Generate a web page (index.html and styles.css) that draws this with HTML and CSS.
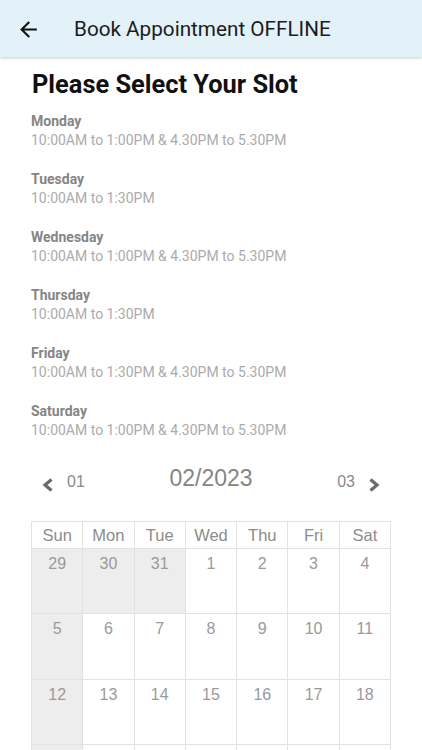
FILE: index.html
```html
<!DOCTYPE html>
<html>
<head>
<meta charset="utf-8">
<link rel="stylesheet" href="styles.css">
</head>
<body>
<header class="appbar">
  <svg class="back" viewBox="0 0 24 24" width="25" height="25"><path d="M20 11H7.83l5.59-5.59L12 4l-8 8 8 8 1.41-1.41L7.83 13H20v-2z" fill="#111"/></svg>
  <div class="title">Book Appointment OFFLINE</div>
</header>
<main class="content">
  <h1 class="heading">Please Select Your Slot</h1>
  <div class="slots">
    <div class="slot"><div class="day">Monday</div><div class="time">10:00AM to 1:00PM &amp; 4.30PM to 5.30PM</div></div>
    <div class="slot"><div class="day">Tuesday</div><div class="time">10:00AM to 1:30PM</div></div>
    <div class="slot"><div class="day">Wednesday</div><div class="time">10:00AM to 1:00PM &amp; 4.30PM to 5.30PM</div></div>
    <div class="slot"><div class="day">Thursday</div><div class="time">10:00AM to 1:30PM</div></div>
    <div class="slot"><div class="day">Friday</div><div class="time">10:00AM to 1:30PM &amp; 4.30PM to 5.30PM</div></div>
    <div class="slot"><div class="day">Saturday</div><div class="time">10:00AM to 1:00PM &amp; 4.30PM to 5.30PM</div></div>
  </div>
  <div class="calendar">
    <div class="cal-nav">
      <div class="nav-left">
        <svg class="chev" viewBox="0 0 12 14" width="12" height="14"><polyline points="9.5,1.5 3,7 9.5,12.5" fill="none" stroke="#6b6b6b" stroke-width="3.2"/></svg>
        <span class="nav-month">01</span>
      </div>
      <div class="nav-current">02/2023</div>
      <div class="nav-right">
        <span class="nav-month">03</span>
        <svg class="chev" viewBox="0 0 12 14" width="12" height="14"><polyline points="2.5,1.5 9,7 2.5,12.5" fill="none" stroke="#6b6b6b" stroke-width="3.2"/></svg>
      </div>
    </div>
    <div class="grid">
      <div class="wd">Sun</div><div class="wd">Mon</div><div class="wd">Tue</div><div class="wd">Wed</div><div class="wd">Thu</div><div class="wd">Fri</div><div class="wd">Sat</div>
      <div class="cell off">29</div><div class="cell off">30</div><div class="cell off">31</div><div class="cell">1</div><div class="cell">2</div><div class="cell">3</div><div class="cell">4</div>
      <div class="cell off">5</div><div class="cell">6</div><div class="cell">7</div><div class="cell">8</div><div class="cell">9</div><div class="cell">10</div><div class="cell">11</div>
      <div class="cell off">12</div><div class="cell">13</div><div class="cell">14</div><div class="cell">15</div><div class="cell">16</div><div class="cell">17</div><div class="cell">18</div>
      <div class="cell off">19</div><div class="cell">20</div><div class="cell">21</div><div class="cell">22</div><div class="cell">23</div><div class="cell">24</div><div class="cell">25</div>
      <div class="cell off">26</div><div class="cell">27</div><div class="cell">28</div><div class="cell off">1</div><div class="cell off">2</div><div class="cell off">3</div><div class="cell off">4</div>
    </div>
  </div>
</main>
</body>
</html>
```
FILE: styles.css
```css
html, body {
  margin: 0;
  padding: 0;
  background: #ffffff;
}
body {
  font-family: Roboto, "Noto Sans", sans-serif;
  width: 422px;
}
.appbar {
  height: 57px;
  background: #e3f2f9;
  display: flex;
  align-items: center;
  padding-left: 16px;
  box-shadow: 0 1px 3px rgba(0, 0, 0, 0.22);
  position: relative;
  z-index: 1;
}
.back {
  display: block;
  margin-top: 1px;
}
.title {
  margin-left: 33px;
  font-size: 20.7px;
  color: #1c1c1c;
}
.content {
  padding: 13px 31px 0 31px;
}
.heading {
  margin: 0 0 0 1px;
  font-size: 25.4px;
  line-height: 28px;
  font-weight: 700;
  color: #111;
}
.slots {
  margin-top: 14px;
  display: flex;
  flex-direction: column;
  gap: 20px;
}
.day {
  font-size: 14px;
  line-height: 18px;
  font-weight: 700;
  color: #858585;
}
.time {
  font-size: 14px;
  line-height: 20px;
  color: #ababab;
}
.calendar {
  margin-top: 25px;
  width: 360px;
}
.cal-nav {
  height: 56px;
  display: grid;
  grid-template-columns: 1fr auto 1fr;
  align-items: start;
  padding: 0 11px;
  font-family: "Liberation Sans", Arial, sans-serif;
  color: #888;
}
.nav-left, .nav-right {
  display: flex;
  align-items: flex-start;
  gap: 13px;
}
.nav-right {
  justify-content: flex-end;
}
.chev {
  display: block;
  margin-top: 13px;
}
.nav-month {
  font-size: 16px;
  line-height: 20px;
  margin-top: 7px;
  color: #8a8a8a;
}
.nav-current {
  font-size: 23px;
  line-height: 26px;
  color: #858585;
}
.grid {
  display: grid;
  grid-template-columns: repeat(7, 1fr);
  grid-auto-rows: 64.4px;
  grid-template-rows: 26px;
  gap: 1px;
  padding: 1px;
  background: #e2e2e2;
  font-family: "Liberation Sans", Arial, sans-serif;
}
.wd {
  background: #fff;
  text-align: center;
  font-size: 16.5px;
  line-height: 20px;
  padding-top: 3px;
  color: #8c8c8c;
}
.cell {
  background: #fff;
  text-align: center;
  font-size: 16px;
  line-height: 16px;
  padding-top: 7px;
  color: #9a9a9a;
}
.cell.off {
  background: #ededed;
}
```
